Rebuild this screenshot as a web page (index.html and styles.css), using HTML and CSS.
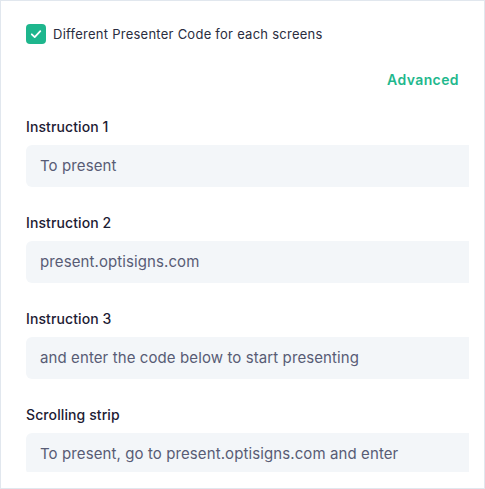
FILE: index.html
```html
<!DOCTYPE html>
<html lang="en">
<head>
<meta charset="utf-8">
<title>Presenter settings</title>
<link rel="stylesheet" href="styles.css">
</head>
<body>
<div class="frame">
  <div class="viewport">
    <div class="content">
      <label class="check-row">
        <span class="checkbox">
          <svg width="14" height="14" viewBox="0 0 14 14" fill="none"><path d="M2.8 7.3 L5.7 10.1 L11.3 4.2" stroke="#fff" stroke-width="1.8" stroke-linecap="round" stroke-linejoin="round"/></svg>
        </span>
        <span class="check-label">Different Presenter Code for each screens</span>
      </label>
      <div class="advanced-row"><a class="advanced">Advanced</a></div>

      <div class="field">
        <div class="field-label">Instruction 1</div>
        <div class="input">To present</div>
      </div>
      <div class="field">
        <div class="field-label">Instruction 2</div>
        <div class="input">present.optisigns.com</div>
      </div>
      <div class="field">
        <div class="field-label">Instruction 3</div>
        <div class="input">and enter the code below to start presenting</div>
      </div>
      <div class="field">
        <div class="field-label">Scrolling strip</div>
        <div class="input">To present, go to present.optisigns.com and enter</div>
      </div>
    </div>
  </div>
</div>
</body>
</html>
```
FILE: styles.css
```css
html, body {
  margin: 0;
  padding: 0;
  background: #ffffff;
}
body {
  font-family: Inter, "Noto Sans", "Liberation Sans", sans-serif;
  color: #1d2033;
}
.frame {
  width: 485px;
  height: 489px;
  box-sizing: border-box;
  border: 1px solid #e1e7ee;
  background: #fff;
}
.viewport {
  width: 468px;
  height: 471px;
  overflow: hidden;
}
.content {
  width: 460px;
  padding: 23px 0 0 25px;
}
.check-row {
  display: flex;
  align-items: center;
  height: 20px;
  gap: 7px;
}
.checkbox {
  width: 20px;
  height: 20px;
  border-radius: 4px;
  background: #1eb68d;
  display: flex;
  align-items: center;
  justify-content: center;
  flex: none;
}
.check-label {
  font-size: 13px;
  color: #2a2d40;
  letter-spacing: 0.25px;
}
.advanced-row {
  display: flex;
  justify-content: flex-end;
  margin-top: 25px;
  padding-right: 27px;
  height: 20px;
  align-items: center;
}
.advanced {
  color: #1fb88d;
  font-weight: 600;
  font-size: 14px;
  letter-spacing: 0.4px;
}
.field {
  margin-top: 28px;
}
.field + .field {
  margin-top: 26px;
}
.field-label {
  height: 20px;
  line-height: 20px;
  font-size: 14px;
  font-weight: 500;
  letter-spacing: 0.1px;
  color: #1d2033;
}
.input {
  margin-top: 8px;
  height: 42px;
  line-height: 42px;
  background: #f3f6f9;
  border-radius: 6px;
  padding-left: 14px;
  font-size: 15px;
  letter-spacing: 0.1px;
  color: #585c75;
  white-space: nowrap;
}
```
